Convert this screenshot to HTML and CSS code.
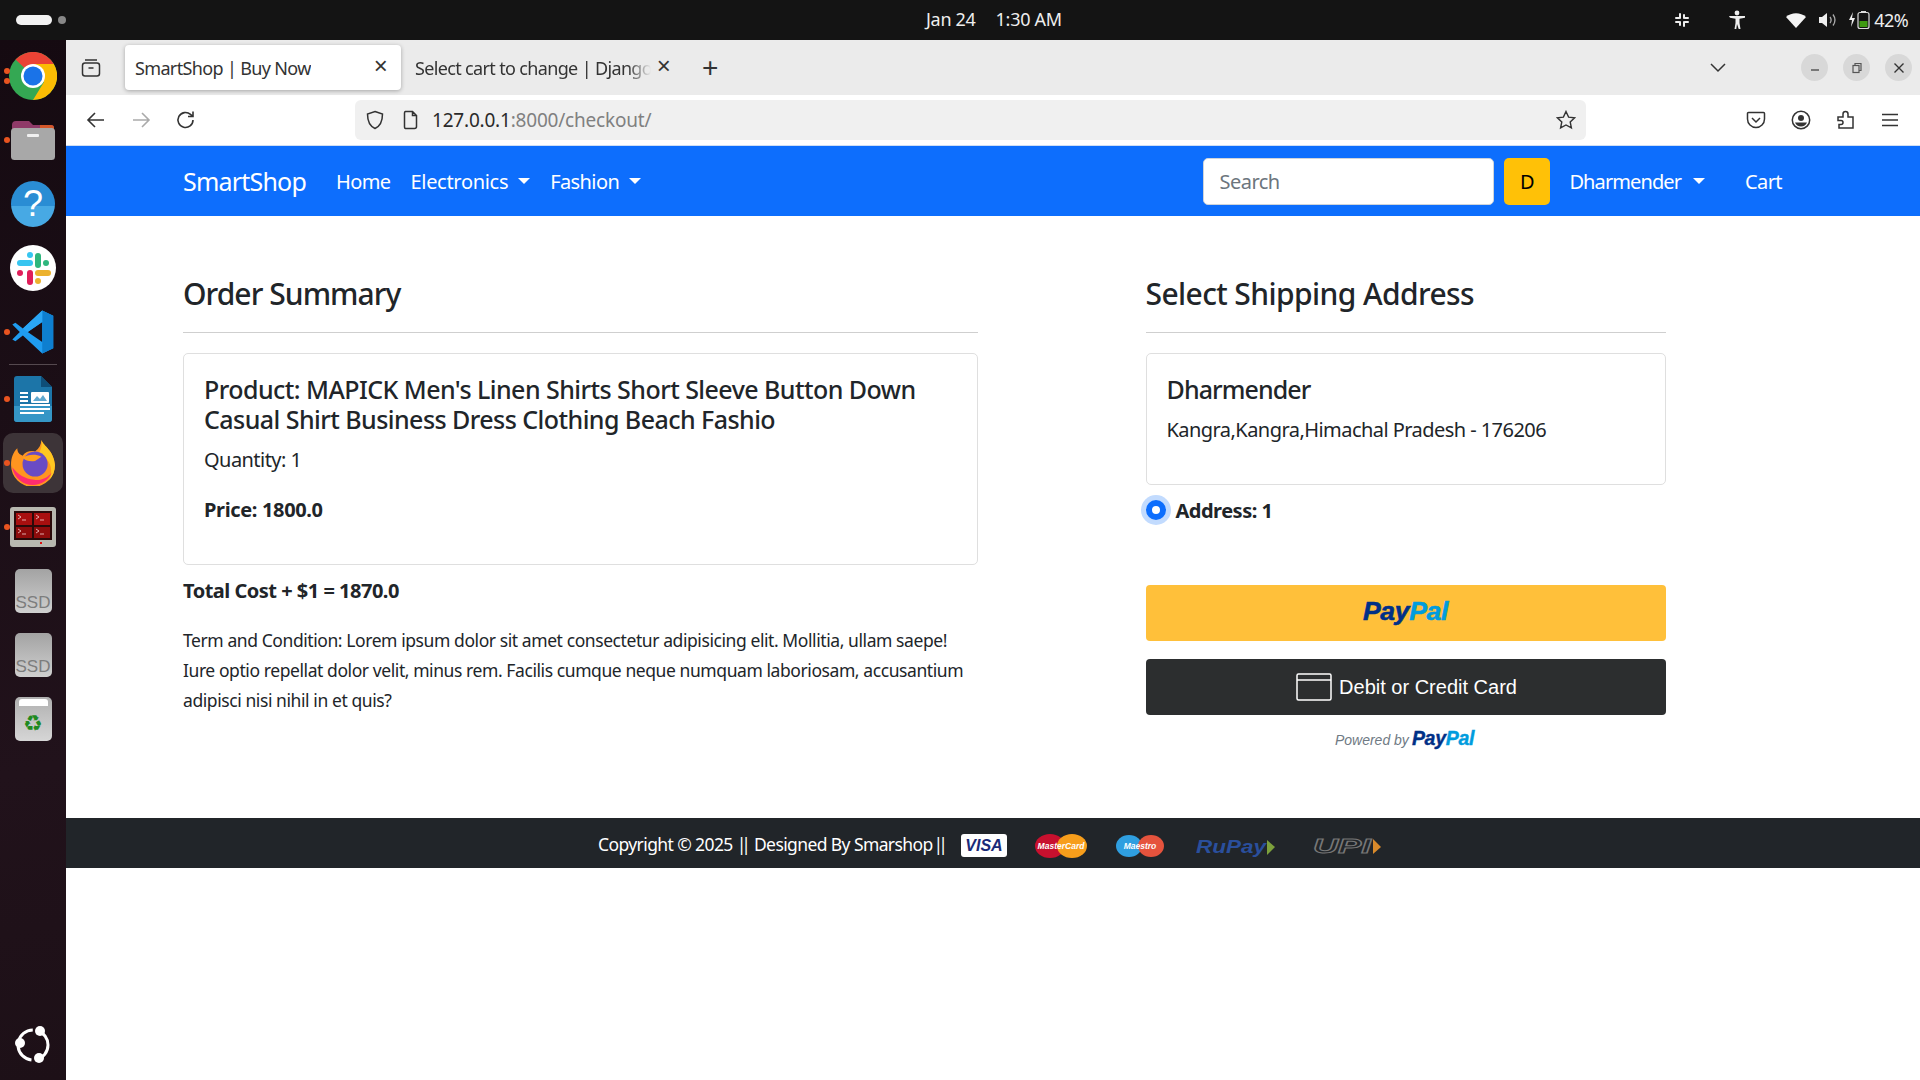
FILE: index.html
```html
<!DOCTYPE html>
<html lang="en">
<head>
<meta charset="utf-8">
<title>SmartShop | Buy Now</title>
<link rel="stylesheet" href="styles.css">
</head>
<body>
<header class="topbar">
  <div class="activities"><span class="pill"></span><span class="pill-dot"></span></div>
  <div class="clock"><span>Jan 24</span><span>1:30 AM</span></div>
  <div class="tray">
    <svg class="tray-slack" width="16" height="16" viewBox="0 0 16 16" fill="#eee"><rect x="5" y="1" width="2" height="6" rx="1"/><rect x="9" y="9" width="2" height="6" rx="1"/><rect x="9" y="2" width="2" height="5" rx="1"/><rect x="5" y="9" width="2" height="5" rx="1"/><rect x="1" y="5" width="5" height="2" rx="1"/><rect x="10" y="9" width="5" height="2" rx="1"/><rect x="10" y="5" width="5" height="2" rx="1"/><rect x="1" y="9" width="5" height="2" rx="1"/></svg>
    <svg class="tray-person" width="18" height="20" viewBox="0 0 18 20" fill="#eee"><circle cx="9" cy="3" r="2.400"/><path d="M1 6h16v1.800l-5.500 1V13l1 6h-1.800L9 14l-.7 5H6.500l1-6V8.800l-5.500-1z"/></svg>
    <svg class="tray-wifi" width="20" height="16" viewBox="0 0 20 16" fill="#f4f4f4"><path d="M0 5C5.500 0 14.500 0 20 5l-10 11z"/></svg>
    <svg class="tray-vol" width="20" height="18" viewBox="0 0 20 18" fill="none"><path d="M1 6h3l5-4v14l-5-4H1z" fill="#eee"/><path d="M12 6c1.500 2 1.500 4 0 6M15 3.500c2.500 3.500 2.500 7.500 0 11" stroke="#aaa" stroke-width="1.300"/></svg>
    <svg class="tray-bat" width="22" height="20" viewBox="0 0 22 20"><path d="M5 2 1 10h3l-1 7 4-9H4z" fill="#eee"/><rect x="10" y="2.500" width="11" height="16" rx="2" fill="none" stroke="#ddd" stroke-width="1.200"/><rect x="13" y="1" width="5" height="1.500" fill="#ddd"/><rect x="11.500" y="11" width="8" height="6" fill="#3f9a12"/></svg>
    <span class="tray-pct">42%</span>
  </div>
</header>
<div class="desktop">
  <nav class="dock">
    <div class="dock-item">
      <span class="dot dot-a"></span><span class="dot dot-b"></span>
      <svg width="48" height="48" viewBox="0 0 48 48"><circle cx="24" cy="24" r="24" fill="#34a853"/><path d="M24 24 6.500 7.500A24 24 0 0 1 44.800 12H24z" fill="#ea4335"/><path d="M24 24V12h20.800A24 24 0 0 1 24 48l11-18z" fill="#fbbc04"/><circle cx="24" cy="24" r="12" fill="#fff"/><circle cx="24" cy="24" r="9.500" fill="#1a73e8"/></svg>
    </div>
    <div class="dock-item">
      <span class="dot"></span>
      <svg width="46" height="42" viewBox="0 0 46 42"><path d="M2 6a4 4 0 0 1 4-4h13l4 4h18a3 3 0 0 1 3 3v8H2z" fill="#8f3a68"/><path d="M30 6h11a3 3 0 0 1 3 3v6H30z" fill="#d4572a"/><rect x="1" y="9" width="44" height="32" rx="3.500" fill="#a8a8a8"/><rect x="17" y="15" width="12" height="3" rx="1" fill="#f0f0f0"/></svg>
    </div>
    <div class="dock-item">
      <div class="help">?</div>
    </div>
    <div class="dock-item">
      <svg width="46" height="46" viewBox="0 0 46 46"><circle cx="23" cy="23" r="23" fill="#fff"/><rect x="7" y="15" width="16" height="6" rx="3" fill="#36c5f0"/><rect x="17" y="7" width="6" height="6" rx="3" fill="#36c5f0"/><rect x="25" y="8" width="6" height="15" rx="3" fill="#2eb67d"/><rect x="33" y="15" width="6" height="6" rx="3" fill="#2eb67d"/><rect x="25" y="25" width="16" height="6" rx="3" fill="#ecb22e"/><rect x="25" y="33" width="6" height="6" rx="3" fill="#ecb22e"/><rect x="17" y="25" width="6" height="15" rx="3" fill="#e01e5a"/><rect x="7" y="25" width="6" height="6" rx="3" fill="#e01e5a"/></svg>
    </div>
    <div class="dock-item">
      <span class="dot"></span>
      <svg width="44" height="44" viewBox="0 0 100 100"><path fill-rule="evenodd" d="M71 1 96 13v74L71 99 27 58 10 71l-7-4 17-17L3 33l7-4 17 13zM71 27 38 50l33 23z" fill="#1f9cf0"/><path d="M71 1 96 13v74L71 99z" fill="#0e7fd0"/><path d="M71 27V1L27 42l11 8z" fill="#2aa6f5"/></svg>
    </div>
    <div class="dock-sep"></div>
    <div class="dock-item">
      <span class="dot"></span>
      <svg width="38" height="46" viewBox="0 0 38 46"><path d="M3 0h24l11 11v32a3 3 0 0 1-3 3H3a3 3 0 0 1-3-3V3a3 3 0 0 1 3-3z" fill="#1c75a8"/><path d="M27 0l11 11H27z" fill="#0e4e78"/><path d="M0 30h38v13a3 3 0 0 1-3 3H3a3 3 0 0 1-3-3z" fill="#3596c6"/><path d="M6 17h8M6 21h8M6 25h8M6 29h30M6 33h30M6 37h24" stroke="#fff" stroke-width="1.800"/><rect x="17" y="16" width="18" height="11" rx="1" fill="#fff"/><path d="M19 25l4-5 3 3 3-4 4 6z" fill="#5fa8cf"/></svg>
    </div>
    <div class="dock-item dock-active">
      <span class="dot"></span>
      <svg width="46" height="46" viewBox="0 0 44 44"><path d="M30 0c2 6 12 10 13 24a21 21 0 0 1-42 0C1 17 3 12 7 8c0 4 2 6 5 7 3-4 8-5 12-4 4-3 6-7 6-11z" fill="#ff9520"/><path d="M30 0c2 6 12 10 13 24 0 6-2 11-6 15 2-4 3-8 2-13-1-6-6-10-11-14 2-4 3-8 2-12z" fill="#ffc721"/><path d="M2 26c2 10 10 17 20 17 8 0 15-5 18-12-4 5-10 8-17 7-9-1-15-5-21-12z" fill="#ff2d6f"/><circle cx="24" cy="23" r="12" fill="#6a4bc4"/><path d="M12 17c5-3 12-4 18-1l-6 4c-4 1-9 0-12-3z" fill="#ff9f1c"/></svg>
    </div>
    <div class="dock-item">
      <span class="dot"></span>
      <svg width="46" height="40" viewBox="0 0 46 40"><rect width="46" height="40" rx="3" fill="#b8b8b0"/><rect x="4" y="4" width="38" height="29" fill="#2a0a0a"/><rect x="6" y="6" width="16" height="12" fill="#a80f0f"/><rect x="24" y="6" width="16" height="12" fill="#a80f0f"/><rect x="6" y="20" width="16" height="11" fill="#8e0c0c"/><rect x="24" y="20" width="16" height="11" fill="#8e0c0c"/><path d="M8 8l3 2-3 2M12 13h4M26 8l3 2-3 2M30 13h4M8 22l3 2-3 2M12 27h4M26 22l3 2-3 2M30 27h4" fill="none" stroke="#f3d0d0" stroke-width=".8"/><rect x="30" y="35" width="2" height="2" fill="#e01010"/></svg>
    </div>
    <div class="dock-item"><div class="ssd"><span>SSD</span></div></div>
    <div class="dock-item"><div class="ssd"><span>SSD</span></div></div>
    <div class="dock-item">
      <div class="trash"><span class="trash-lid"></span><span class="trash-sym">♻</span></div>
    </div>
    <div class="dock-bottom">
      <svg width="38" height="38" viewBox="0 0 38 38"><circle cx="19" cy="19" r="15" fill="none" stroke="#fff" stroke-width="3" stroke-dasharray="20 5"/><circle cx="26" cy="5" r="5" fill="#fff"/><circle cx="6" cy="17" r="5" fill="#fff"/><circle cx="25" cy="32" r="5" fill="#fff"/></svg>
    </div>
  </nav>
  <div class="browser">
    <div class="tabstrip">
      <svg class="ts-icon" width="20" height="20" viewBox="0 0 20 20" fill="none" stroke="#333" stroke-width="1.500"><rect x="1.500" y="5" width="17" height="13" rx="2.500"/><path d="M4 2h12M7.500 10h5"/></svg>
      <div class="tab tab-active"><span class="tab-title">SmartShop | Buy Now</span><span class="tab-close">×</span></div>
      <div class="tab tab-other"><span class="tab-title tab-fade">Select cart to change | Django</span><span class="tab-close">×</span></div>
      <span class="tab-new">+</span>
      <svg class="ts-chev" width="16" height="10" viewBox="0 0 16 10" fill="none" stroke="#333" stroke-width="1.500"><path d="M1 1l7 7 7-7"/></svg>
      <div class="winbtns">
        <span class="winbtn"><svg width="12" height="12" viewBox="0 0 12 12" stroke="#444" stroke-width="1.300"><path d="M2 8h8"/></svg></span>
        <span class="winbtn"><svg width="12" height="12" viewBox="0 0 12 12" fill="none" stroke="#555" stroke-width="1.200"><rect x="2" y="3.500" width="6" height="7"/><path d="M4 3.500V1.500h6v7H8"/></svg></span>
        <span class="winbtn"><svg width="12" height="12" viewBox="0 0 12 12" stroke="#333" stroke-width="1.400"><path d="M1.500 1.500l9 9M10.500 1.500l-9 9"/></svg></span>
      </div>
    </div>
    <div class="toolbar">
      <svg class="tb-back" width="20" height="18" viewBox="0 0 20 18" fill="none" stroke="#333" stroke-width="1.600"><path d="M18 9H2M9 2 2 9l7 7"/></svg>
      <svg class="tb-fwd" width="20" height="18" viewBox="0 0 20 18" fill="none" stroke="#aaa" stroke-width="1.600"><path d="M2 9h16M11 2l7 7-7 7"/></svg>
      <svg class="tb-reload" width="20" height="20" viewBox="0 0 20 20" fill="none" stroke="#333" stroke-width="1.600"><path d="M17 10a7.500 7.500 0 1 1-2.500-5.600L17 6.500M17 1.500v5h-5"/></svg>
      <div class="urlbar">
        <svg class="ub-shield" width="18" height="20" viewBox="0 0 18 20" fill="none" stroke="#333" stroke-width="1.500"><path d="M9 1.500 16.500 4c0 7-2 12-7.500 14.500C3.500 16 1.500 11 1.500 4z"/></svg>
        <svg class="ub-doc" width="16" height="20" viewBox="0 0 16 20" fill="none" stroke="#333" stroke-width="1.500"><path d="M2.500 1.500h7l4 4v11a2 2 0 0 1-2 2h-9a1.500 1.500 0 0 1-1-1.500V3a1.500 1.500 0 0 1 1-1.500zM9.500 1.500v4h4"/></svg>
        <span class="ub-text">127.0.0.1<span class="ub-dim">:8000/checkout/</span></span>
        <svg class="ub-star" width="20" height="20" viewBox="0 0 20 20" fill="none" stroke="#333" stroke-width="1.400"><path d="M10 1.500l2.600 5.600 6 .7-4.400 4.100 1.200 6L10 15l-5.400 2.900 1.200-6L1.400 7.800l6-.7z"/></svg>
      </div>
      <div class="tb-right">
        <svg width="20" height="18" viewBox="0 0 20 18" fill="none" stroke="#333" stroke-width="1.500"><path d="M2.500 1.500h15a1 1 0 0 1 1 1V8a8.500 8.500 0 0 1-17 0V2.500a1 1 0 0 1 1-1zM6 7l4 4 4-4"/></svg>
        <svg width="20" height="20" viewBox="0 0 20 20"><circle cx="10" cy="10" r="8.700" fill="none" stroke="#333" stroke-width="1.500"/><circle cx="10" cy="8" r="3" fill="#333"/><path d="M4 12.500h12a6.500 6.500 0 0 1-12 0z" fill="#333"/></svg>
        <svg width="20" height="20" viewBox="0 0 20 20" fill="none" stroke="#333" stroke-width="1.500"><path d="M2 7h5V4a2.500 2.500 0 0 1 5 0v3h5v11H3v-3.500h2a2 2 0 0 0 0-4H2z"/></svg>
        <svg width="18" height="14" viewBox="0 0 18 14" stroke="#333" stroke-width="1.500"><path d="M1 1.500h16M1 7h16M1 12.500h16"/></svg>
      </div>
    </div>
    <div class="shopnav">
      <div class="container nav-inner">
        <a class="brand">SmartShop</a>
        <a class="nav-link">Home</a>
        <a class="nav-link caret nav-elec">Electronics</a>
        <a class="nav-link caret">Fashion</a>
        <div class="nav-right">
          <input class="search" type="text" placeholder="Search">
          <span class="avatar">D</span>
          <a class="nav-link caret nav-user">Dharmender</a>
          <a class="nav-link">Cart</a>
        </div>
      </div>
    </div>
    <main class="container content">
      <section class="col-left">
        <h3>Order Summary</h3>
        <hr>
        <div class="card">
          <h5>Product: MAPICK Men's Linen Shirts Short Sleeve Button Down Casual Shirt Business Dress Clothing Beach Fashio</h5>
          <p>Quantity: 1</p>
          <p class="strong">Price: 1800.0</p>
        </div>
        <p class="strong total">Total Cost + $1 = 1870.0</p>
        <p class="terms">Term and Condition: Lorem ipsum dolor sit amet consectetur adipisicing elit. Mollitia, ullam saepe! Iure optio repellat dolor velit, minus rem. Facilis cumque neque numquam laboriosam, accusantium adipisci nisi nihil in et quis?</p>
      </section>
      <section class="col-right">
        <h3>Select Shipping Address</h3>
        <hr>
        <div class="card">
          <h5>Dharmender</h5>
          <p>Kangra,Kangra,Himachal Pradesh - 176206</p>
        </div>
        <label class="addr"><span class="radio"></span>Address: 1</label>
        <div class="pp-btn pp-gold"><span class="pp-logo"><b>Pay</b><i>Pal</i></span></div>
        <div class="pp-btn pp-dark">
          <svg width="36" height="28" viewBox="0 0 36 28" fill="none" stroke="#fff" stroke-width="1.500"><rect x="1" y="1" width="34" height="26" rx="1.500"/><path d="M1 7h34"/></svg>
          <span>Debit or Credit Card</span>
        </div>
        <div class="powered"><span>Powered by</span> <span class="pp-logo pp-small"><b>Pay</b><i>Pal</i></span></div>
      </section>
    </main>
    <footer class="footer">
      <span class="copy">Copyright © 2025 <span class="pipes">||</span> Designed By Smarshop <span class="pipes pipes-end">||</span></span>
      <span class="pay-visa">VISA</span>
      <svg class="pay-mc" width="52" height="24" viewBox="0 0 52 24"><ellipse cx="15" cy="12" rx="15" ry="12" fill="#c8102e"/><ellipse cx="37" cy="12" rx="15" ry="12" fill="#f79e1b"/><text x="26" y="15" text-anchor="middle" class="mc-text">MasterCard</text></svg>
      <svg class="pay-ma" width="48" height="22" viewBox="0 0 48 22"><ellipse cx="13" cy="11" rx="13" ry="11" fill="#2f9fe0"/><ellipse cx="35" cy="11" rx="13" ry="11" fill="#e5533d"/><text x="24" y="14" text-anchor="middle" class="mc-text">Maestro</text></svg>
      <svg class="pay-ru" width="80" height="22" viewBox="0 0 80 22"><text x="0" y="18" textLength="70" lengthAdjust="spacingAndGlyphs" class="ru-text">RuPay</text><path d="M71 5l8 7-8 8z" fill="#7da13c"/></svg>
      <svg class="pay-upi" width="69" height="22" viewBox="0 0 69 22"><text x="0" y="18" textLength="58" lengthAdjust="spacingAndGlyphs" class="upi-text">UPI</text><path d="M60 4l8 8-8 7z" fill="#d98a2b"/></svg>
    </footer>
  </div>
</div>
</body>
</html>
```
FILE: styles.css
```css
* { box-sizing: border-box; }
html, body { margin: 0; height: 100%; }
body { width: 1920px; height: 1080px; overflow: hidden; font-family: "Noto Sans", "Liberation Sans", sans-serif; color: #212529; font-size: 20px; background: #fff; }

.topbar { height: 40px; background: #141414; display: flex; align-items: center; position: relative; color: #eee; }
.activities { display: flex; align-items: center; margin-left: 16px; gap: 6px; }
.pill { width: 36px; height: 10px; border-radius: 5px; background: #f2f2f2; }
.pill-dot { width: 8px; height: 8px; border-radius: 50%; background: #888; }
.clock { position: absolute; left: 926px; top: 6px; line-height: 27px; display: flex; gap: 20px; font-size: 18px; letter-spacing: -0.3px; }
.tray { margin-left: auto; display: flex; align-items: center; padding-right: 12px; }
.tray-slack { margin-right: 37.500px; }
.tray-person { margin-right: 40px; }
.tray-wifi { margin-right: 12px; }
.tray-vol { margin-right: 10px; }
.tray-bat { margin-right: 4.500px; }
.tray-pct { font-size: 18px; letter-spacing: -0.6px; }

.desktop { display: flex; height: 1040px; }
.dock { width: 66px; flex: none; background: linear-gradient(170deg, #150a11 0%, #21121b 70%, #1d1017 100%); display: flex; flex-direction: column; padding-top: 4px; }
.dock-item { height: 64px; display: flex; align-items: center; justify-content: center; position: relative; flex: none; }
.dock-sep { height: 1px; margin: 0 9px 2px; background: #55494f; flex: none; }
.dock-active { background: #3d3438; border-radius: 10px; margin: 2px 3px; height: 60px; }
.dock-active .dot { left: 1px; }
.dot { position: absolute; left: 4px; top: 50%; width: 6px; height: 6px; margin-top: -3px; border-radius: 50%; background: #e95420; }
.dot-a { margin-top: -8px; }
.dot-b { margin-top: 2px; }
.help { width: 44px; height: 46px; border-radius: 50%; background: linear-gradient(#2a8dd4 55%, #47a9e4 55%); color: #fff; font-size: 36px; text-align: center; line-height: 46px; font-family: "Liberation Sans", sans-serif; }
.ssd { width: 37px; height: 44px; border-radius: 5px; background: linear-gradient(#a3a3a3, #cfcfcf); display: flex; align-items: flex-end; justify-content: center; overflow: hidden; }
.ssd span { font-size: 17px; color: #7d7d7d; line-height: 20px; font-family: "Liberation Sans", sans-serif; }
.trash { width: 37px; height: 44px; border-radius: 5px; background: linear-gradient(#b0b0b0, #d6d6d6); display: flex; flex-direction: column; align-items: center; }
.trash-lid { width: 29px; height: 7px; margin-top: 2px; background: #fff; border-radius: 3px 3px 0 0; flex: none; }
.trash-sym { color: #1f8a1f; font-size: 22px; line-height: 28px; margin-top: 4px; font-family: "DejaVu Sans", sans-serif; }
.dock-bottom { margin-top: auto; height: 54px; display: flex; justify-content: center; flex: none; }

.browser { flex: 1; min-width: 0; display: flex; flex-direction: column; }
.tabstrip { height: 55px; flex: none; background: #ebebeb; display: flex; align-items: center; position: relative; }
.ts-icon { margin-left: 15px; }
.tab { display: flex; align-items: center; justify-content: space-between; height: 45px; font-size: 18px; letter-spacing: -0.65px; color: #333; white-space: nowrap; }
.tab-active { margin-left: 24px; width: 276px; background: #fff; border-radius: 4px; box-shadow: 0 1px 4px rgba(0,0,0,.3); padding: 0 14px 0 10px; }
.tab-other { margin-left: 4px; width: 275px; padding: 0 10px 0 10px; }
.tab-title { overflow: hidden; }
.tab-fade { width: 236px; -webkit-mask-image: linear-gradient(90deg, #000 90%, transparent); mask-image: linear-gradient(90deg, #000 90%, transparent); }
.tab-close { font-size: 24px; font-weight: 300; line-height: 1; font-family: "Liberation Sans", sans-serif; margin-top: -3px; }
.tab-new { margin-left: 22px; font-size: 28px; font-weight: 300; color: #333; line-height: 1; font-family: "Liberation Sans", sans-serif; }
.ts-chev { position: absolute; left: 1644px; top: 23px; }
.winbtns { margin-left: auto; display: flex; gap: 15px; padding-right: 8px; }
.winbtn { width: 27px; height: 27px; border-radius: 50%; background: #d8d8d8; display: flex; align-items: center; justify-content: center; }

.toolbar { height: 51px; flex: none; background: #fff; border-bottom: 1px solid #cfdff5; display: flex; align-items: center; padding-left: 20px; }
.tb-fwd { margin-left: 25px; }
.tb-reload { margin-left: 25px; }
.urlbar { margin-left: 159px; width: 1231px; height: 40px; background: #f0f0f0; border-radius: 6px; display: flex; align-items: center; padding: 0 10px 0 11px; }
.ub-doc { margin-left: 19px; }
.ub-text { margin-left: 13px; font-size: 19px; letter-spacing: -0.2px; color: #2a2a2a; }
.ub-dim { color: #808080; }
.ub-star { margin-left: auto; }
.tb-right { display: flex; align-items: center; margin-left: 159.500px; gap: 25px; }

.container { width: 1650px; margin: 0 auto; }
.shopnav { height: 70px; flex: none; background: #0d6efd; }
.nav-inner { display: flex; align-items: center; height: 70px; padding: 0 15px; }
.brand { font-size: 25px; color: #fff; margin-right: 20px; letter-spacing: -0.8px; }
.nav-link { padding: 0 10px; color: #fff; font-size: 20px; letter-spacing: -0.6px; display: inline-flex; align-items: center; }
.nav-elec { letter-spacing: -0.3px; }
.caret::after { content: ""; margin-left: 10px; border-top: 6px solid #fff; border-left: 6px solid transparent; border-right: 6px solid transparent; }
.nav-right { margin-left: auto; display: flex; align-items: center; padding-right: 11px; }
.search { width: 291px; height: 47px; border: 1px solid #ced4da; border-radius: 5px; padding: 0 15px; font: inherit; font-size: 20px; letter-spacing: -0.5px; background: #fff; }
.search::placeholder { color: #6c757d; }
.avatar { width: 46px; height: 47px; margin-left: 10px; background: #ffc107; border-radius: 5px; display: flex; align-items: center; justify-content: center; color: #000; font-size: 20px; }
.nav-user { margin-left: 9px; margin-right: 20px; letter-spacing: -0.9px; }
.nav-user::after { margin-left: 12px; }

.content { display: flex; height: 602px; flex: none; }
.col-left { width: 825px; padding: 0 15px; }
.col-right { width: 550px; margin-left: 137.500px; padding: 0 15px; }
h3 { margin: 57px 0 17px; font-size: 30px; line-height: 42px; font-weight: 500; letter-spacing: -0.95px; }
.col-right h3 { letter-spacing: -0.6px; }
hr { margin: 0 0 20px; border: 0; border-top: 1px solid #cfcfcf; }
.card { border: 1px solid #dfdfdf; border-radius: 5px; padding: 20px; }
h5 { margin: 0 0 10px; font-size: 25px; line-height: 30px; font-weight: 500; letter-spacing: -0.55px; }
.col-right h5 { letter-spacing: -0.9px; }
p { margin: 0 0 20px; padding-top: 2px; font-size: 20px; line-height: 28px; letter-spacing: -0.55px; }
.strong { font-weight: 700; letter-spacing: -0.35px; }
.total { margin-top: 10px; letter-spacing: -0.5px; }
.terms { margin: 3px 0 17px; padding-top: 0; max-width: 790px; font-size: 17.500px; line-height: 30px; letter-spacing: -0.42px; }

.addr { display: flex; align-items: center; height: 30px; margin-top: 10px; font-weight: 700; font-size: 20px; letter-spacing: -0.5px; }
.radio { width: 20px; height: 20px; border-radius: 50%; background: #fff; border: 6px solid #0d6efd; box-shadow: 0 0 0 5px #c2dbfe; margin-right: 10px; }
.pp-btn { height: 56px; border-radius: 4px; display: flex; align-items: center; justify-content: center; }
.pp-gold { background: #ffc03a; margin-top: 60px; padding-bottom: 4px; }
.pp-dark { background: #2c2e2f; margin-top: 18px; color: #fff; gap: 7px; font-family: "Liberation Sans", sans-serif; font-size: 20px; padding-left: 2px; }
.pp-logo { font-family: "Liberation Sans", sans-serif; font-size: 26.500px; font-style: italic; font-weight: 700; letter-spacing: -0.3px; -webkit-text-stroke: 0.6px currentColor; }
.pp-logo b { color: #003087; }
.pp-logo i { color: #009cde; }
.pp-small { font-size: 19.500px; -webkit-text-stroke: 0.4px currentColor; margin-top: -3px; }
.powered { height: 50px; display: flex; justify-content: center; align-items: center; gap: 3px; font-family: "Liberation Sans", sans-serif; font-style: italic; font-size: 14px; color: #6f7a84; margin-left: -2px; }

.footer { height: 50px; flex: none; background: #212529; display: flex; align-items: center; color: #fff; font-size: 17.500px; padding-left: 532px; }
.copy { letter-spacing: -0.6px; white-space: nowrap; width: 363px; padding-top: 1px; }
.pipes { letter-spacing: -5px; margin-right: 4px; }
.pipes-end { margin-left: -3px; }
.pay-visa { width: 46px; height: 23px; margin-top: 5px; background: #fff; border-radius: 3px; color: #1a2a78; font: italic 700 16px "Liberation Sans", sans-serif; text-align: center; line-height: 23px; }
.pay-mc { margin-left: 28px; margin-top: 5px; }
.pay-ma { margin-left: 29px; margin-top: 5px; }
.mc-text { font: italic 700 8.500px "Liberation Sans", sans-serif; fill: #fff; }
.pay-ru { margin-left: 32px; margin-top: 5px; }
.ru-text { font: italic 700 19px "Liberation Sans", sans-serif; fill: #2a4f9c; }
.pay-upi { margin-left: 37px; margin-top: 5px; }
.upi-text { font: italic 700 20px "Liberation Sans", sans-serif; fill: none; stroke: #777; stroke-width: 1; }
```
